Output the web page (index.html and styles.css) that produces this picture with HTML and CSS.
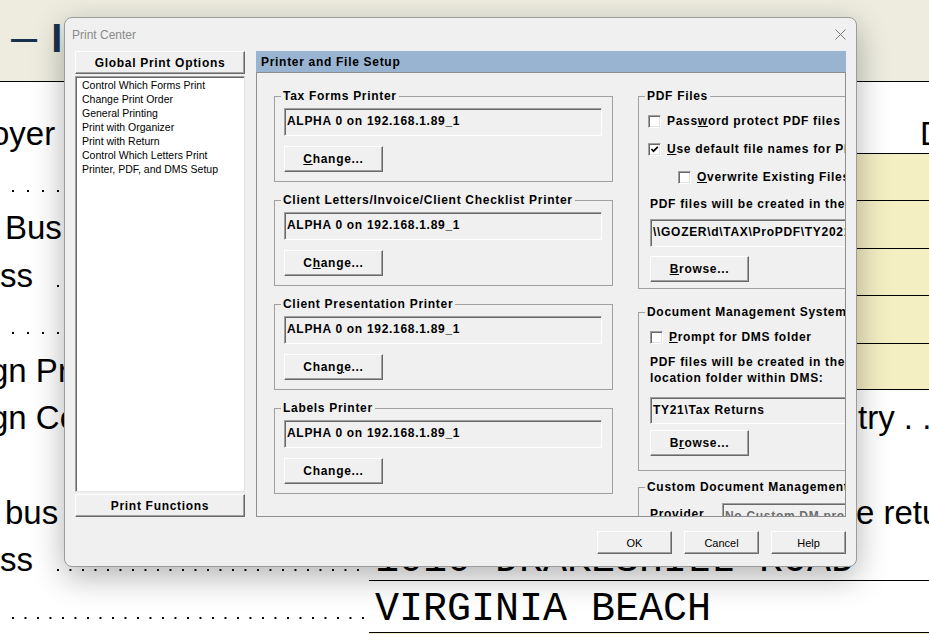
FILE: index.html
```html
<!DOCTYPE html>
<html lang="en">
<head>
  <meta charset="UTF-8">
  <title>Print Center</title>
  <link rel="stylesheet" href="styles.css">
</head>
<body>
  <!-- Return form behind the dialog -->
  <div class="form">
    <div class="form-head"><span class="title-dash">–</span><span class="form-title">I</span></div>
    <div class="form-row tall">
      <div class="label-cell"><span class="indent-cut">oyer</span></div>
      <div class="value-cell"><span class="far-label">D</span></div>
    </div>
    <div class="form-row">
      <div class="label-cell"><span class="leader wide" style="width: 340px"></span></div>
      <div class="value-cell filled"></div>
    </div>
    <div class="form-row">
      <div class="label-cell"><span class="gap-left">Bus</span></div>
      <div class="value-cell filled"></div>
    </div>
    <div class="form-row">
      <div class="label-cell">ss<span class="leader after-ss" style="width: 300px"></span></div>
      <div class="value-cell filled"></div>
    </div>
    <div class="form-row">
      <div class="label-cell"><span class="leader wide" style="width: 340px"></span></div>
      <div class="value-cell filled"></div>
    </div>
    <div class="form-row">
      <div class="label-cell"><span class="indent-gn">gn Province</span></div>
      <div class="value-cell filled last"></div>
    </div>
    <div class="form-row">
      <div class="label-cell"><span class="indent-gn">gn Country</span></div>
      <div class="value-cell"><span class="try-label">try . .</span></div>
    </div>
    <div class="form-row">
      <div class="label-cell"></div>
      <div class="value-cell"></div>
    </div>
    <div class="form-row">
      <div class="label-cell"><span class="gap-left">bus</span></div>
      <div class="value-cell"><span class="retu-label">e return</span></div>
    </div>
    <div class="form-row">
      <div class="label-cell">ss<span class="leader after-ss tight" style="width: 310px"></span></div>
      <div class="value-cell"><span class="mono">1010 DRAKESHILL ROAD</span></div>
    </div>
    <div class="form-row addr">
      <div class="label-cell"><span class="leader tight first" style="width: 355px"></span></div>
      <div class="value-cell lined"><span class="mono">VIRGINIA BEACH</span></div>
    </div>
    <div class="form-row end">
      <div class="label-cell"></div>
      <div class="value-cell filled"></div>
    </div>
  </div>

  <!-- Print Center dialog -->
  <div class="dialog">
    <div class="titlebar">
      <span class="title">Print Center</span>
      <svg class="close" width="11" height="11" viewBox="0 0 11 11">
        <path d="M0.5 0.5L10.5 10.5M10.5 0.5L0.5 10.5" stroke="#7a7a7a" stroke-width="1"/>
      </svg>
    </div>
    <div class="dlg-main">
      <div class="sidebar">
        <button class="btn side-btn">Global Print Options</button>
        <ul class="listbox">
          <li>Control Which Forms Print</li>
          <li>Change Print Order</li>
          <li>General Printing</li>
          <li>Print with Organizer</li>
          <li>Print with Return</li>
          <li>Control Which Letters Print</li>
          <li>Printer, PDF, and DMS Setup</li>
        </ul>
        <button class="btn side-btn">Print Functions</button>
      </div>
      <section class="panel">
        <div class="panel-head">Printer and File Setup</div>
        <div class="panel-body">
          <div class="col-printers">
            <fieldset class="group">
              <legend>Tax Forms Printer</legend>
              <div class="field">ALPHA 0 on 192.168.1.89_1</div>
              <button class="btn change-btn"><u>C</u>hange...</button>
            </fieldset>
            <fieldset class="group">
              <legend>Client Letters/Invoice/Client Checklist Printer</legend>
              <div class="field">ALPHA 0 on 192.168.1.89_1</div>
              <button class="btn change-btn">C<u>h</u>ange...</button>
            </fieldset>
            <fieldset class="group">
              <legend>Client Presentation Printer</legend>
              <div class="field">ALPHA 0 on 192.168.1.89_1</div>
              <button class="btn change-btn">Chan<u>g</u>e...</button>
            </fieldset>
            <fieldset class="group">
              <legend>Labels Printer</legend>
              <div class="field">ALPHA 0 on 192.168.1.89_1</div>
              <button class="btn change-btn">Change...</button>
            </fieldset>
          </div>
          <div class="col-files">
            <fieldset class="group pdf-group">
              <legend>PDF Files</legend>
              <label class="check"><span class="box"></span>Pass<u>w</u>ord protect PDF files</label>
              <label class="check"><span class="box"><svg width="11" height="11" viewBox="0 0 11 11"><path d="M2.5 5L4.5 7.2L8.8 2.8" fill="none" stroke="#000" stroke-width="1.7"/></svg></span><u>U</u>se default file names for PDF files</label>
              <label class="check indent"><span class="box"></span><u>O</u>verwrite Existing Files</label>
              <p class="note">PDF files will be created in the following folder:</p>
              <div class="field path-field">\\GOZER\d\TAX\ProPDF\TY2021</div>
              <button class="btn browse-btn"><u>B</u>rowse...</button>
            </fieldset>
            <fieldset class="group dms-group">
              <legend>Document Management System</legend>
              <label class="check"><span class="box"></span><u>P</u>rompt for DMS folder</label>
              <p class="note two-line">PDF files will be created in the following<br>location folder within DMS:</p>
              <div class="field path-field dms-field">TY21\Tax Returns</div>
              <button class="btn browse-btn dms-browse">B<u>r</u>owse...</button>
            </fieldset>
            <fieldset class="group custom-group">
              <legend>Custom Document Management System</legend>
              <div class="provider-row">
                <span class="provider-label">Provider</span>
                <div class="field provider-field">No Custom DM provider</div>
              </div>
            </fieldset>
          </div>
        </div>
      </section>
    </div>
    <div class="dlg-foot">
      <button class="btn foot-btn">OK</button>
      <button class="btn foot-btn">Cancel</button>
      <button class="btn foot-btn">Help</button>
    </div>
  </div>
</body>
</html>
```

FILE: styles.css
```css
:root {
  --face: #f0f0f0;
  --shadow: #a0a0a0;
  --dark: #696969;
  --caption: #99b4d1;
  --paper: #edecdf;
  --fill: #f4eec3;
}
* { box-sizing: border-box; }
body {
  margin: 0;
  width: 929px;
  height: 634px;
  overflow: hidden;
  position: relative;
  background: #fff;
  color: #000;
  font-family: "Liberation Sans", Arial, sans-serif;
}

/* Form behind */
.form-head {
  height: 82px;
  background: var(--paper);
  border-bottom: 1px solid #000;
  padding: 12px 0 0 11px;
  color: #17324f;
  line-height: 48px;
}
.title-dash {
  font-size: 47px;
  margin-right: 14px;
}
.form-title {
  font-size: 40px;
  font-weight: bold;
}
.form-row {
  display: flex;
  height: 47.4px;
}
.form-row.tall { height: 71px; }
.form-row.addr { height: 52px; }
.form-row.end { height: 2px; }
.label-cell,
.value-cell {
  font-size: 33px;
  line-height: 47.4px;
  padding-top: 4px;
  white-space: nowrap;
  overflow: hidden;
}
.label-cell {
  width: 369px;
  flex-shrink: 0;
}
.form-row.tall .label-cell,
.form-row.tall .value-cell { padding-top: 27.6px; }
.value-cell { flex: 1; }
.value-cell.filled {
  background: var(--fill);
  border-top: 1px solid #000;
}
.value-cell.last { border-bottom: 1px solid #000; }
.value-cell.lined { border-top: 1px solid #000; }
.indent-cut { margin-left: -9px; }
.indent-gn { margin-left: -10px; }
.gap-left { margin-left: 5px; }
.far-label { margin-left: 551px; }
.try-label { margin-left: 489px; }
.retu-label { margin-left: 487px; }
.leader {
  display: inline-block;
  height: 2px;
  background: linear-gradient(to right, #000 2px, transparent 2px) 0 0 / 15px 2px repeat-x;
}
.leader.wide { margin-left: 12px; }
.leader.after-ss { margin-left: 24px; }
.leader.tight { background-size: 12.5px 2px; }
.leader.first { margin-left: 12px; }
.mono {
  font-family: "Liberation Mono", monospace;
  font-size: 40px;
  margin-left: 6px;
}

/* Dialog */
.dialog {
  position: absolute;
  left: 64px;
  top: 17px;
  width: 793px;
  height: 550px;
  background: var(--face);
  border: 1px solid #9c9c9c;
  border-radius: 8px;
  box-shadow: 0 10px 32px rgba(0,0,0,0.3);
  display: flex;
  flex-direction: column;
  font-size: 12px;
  font-weight: bold;
  letter-spacing: 0.7px;
}
.titlebar {
  height: 33px;
  flex-shrink: 0;
  display: flex;
  align-items: center;
  justify-content: space-between;
  padding: 0 10px 0 7px;
}
.title {
  font-weight: normal;
  letter-spacing: 0;
  color: #8a8a8a;
}
.dlg-main {
  height: 466px;
  flex-shrink: 0;
  display: flex;
  gap: 11px;
  padding: 0 10px;
}
.btn {
  font: inherit;
  letter-spacing: inherit;
  color: #000;
  background: var(--face);
  border: 1px solid;
  border-color: #fff var(--dark) var(--dark) #fff;
  box-shadow: inset -1px -1px 0 var(--shadow);
  padding: 0;
  cursor: default;
}
.sidebar {
  width: 170px;
  display: flex;
  flex-direction: column;
  gap: 2px;
}
.side-btn { height: 23px; }
.listbox {
  flex: 1;
  margin: 0;
  padding: 1px 6px;
  list-style: none;
  background: #fff;
  border: 1px solid;
  border-color: var(--shadow) #e3e3e3 #e3e3e3 var(--shadow);
  box-shadow: inset 1px 1px 0 var(--dark);
  font-weight: normal;
  letter-spacing: 0;
  font-size: 10.5px;
  line-height: 14px;
}
.panel {
  width: 590px;
  display: flex;
  flex-direction: column;
}
.panel-head {
  height: 21px;
  flex-shrink: 0;
  background: var(--caption);
  padding: 2px 5px 0;
  line-height: 19px;
}
.panel-body {
  flex: 1;
  border: 1px solid #8f8f8f;
  display: flex;
  align-items: flex-start;
  padding: 16px 0 0 17px;
  overflow: hidden;
}
.group {
  margin: 0;
  min-width: 0;
  border: 1px solid var(--shadow);
  padding: 5px 10px 9px 9px;
}
.group + .group { margin-top: 11px; }
.group legend {
  padding: 0 2px;
  margin-left: -3px;
  line-height: 14px;
  white-space: nowrap;
}
.col-printers {
  width: 339px;
  flex-shrink: 0;
}
.field {
  height: 28px;
  background: var(--face);
  border: 1px solid;
  border-color: var(--shadow) #fff #fff var(--shadow);
  box-shadow: inset 1px 1px 0 var(--dark);
  padding: 5px 2px 0;
  line-height: 14px;
  white-space: nowrap;
  overflow: hidden;
}
.change-btn,
.browse-btn {
  display: block;
  width: 99px;
  height: 26px;
  margin-top: 10px;
}
.col-files {
  width: 262px;
  flex-shrink: 0;
  margin-left: 25px;
}
.pdf-group { padding: 4px 0 6px 9px; }
.check {
  display: flex;
  align-items: center;
  height: 28px;
  white-space: nowrap;
}
.check.indent { padding-left: 30px; }
.box {
  width: 13px;
  height: 13px;
  flex-shrink: 0;
  margin-right: 6px;
  background: #fff;
  border: 1px solid;
  border-color: var(--shadow) #fff #fff var(--shadow);
  box-shadow: inset 1px 1px 0 var(--dark), inset -1px -1px 0 #e3e3e3;
  display: flex;
}
.note {
  margin: 6px 0 0 2px;
  line-height: 14px;
  white-space: nowrap;
}
.path-field {
  margin: 8px 0 0 2px;
}
.browse-btn {
  margin: 9px 0 0 2px;
}
.group.dms-group {
  margin-top: 16px;
  padding: 4px 0 14px 11px;
}
.dms-group legend,
.custom-group legend { margin-left: -5px; }
.note.two-line {
  margin: 3px 0 0 0;
  line-height: 16px;
}
.path-field.dms-field {
  height: 27px;
  margin: 11px 0 0 0;
}
.browse-btn.dms-browse { margin: 6px 0 0 0; }
.group.custom-group {
  margin-top: 9px;
  padding: 9px 0 20px 11px;
}
.provider-row { display: flex; }
.provider-label {
  width: 72px;
  padding-top: 4px;
  line-height: 14px;
}
.provider-field {
  width: 160px;
  color: #6d6d6d;
}
.dlg-foot {
  display: flex;
  justify-content: flex-end;
  gap: 12px;
  padding: 14px 10px 0 0;
}
.foot-btn {
  width: 75px;
  height: 23px;
  font-weight: normal;
  letter-spacing: 0;
  font-size: 11px;
}
```
